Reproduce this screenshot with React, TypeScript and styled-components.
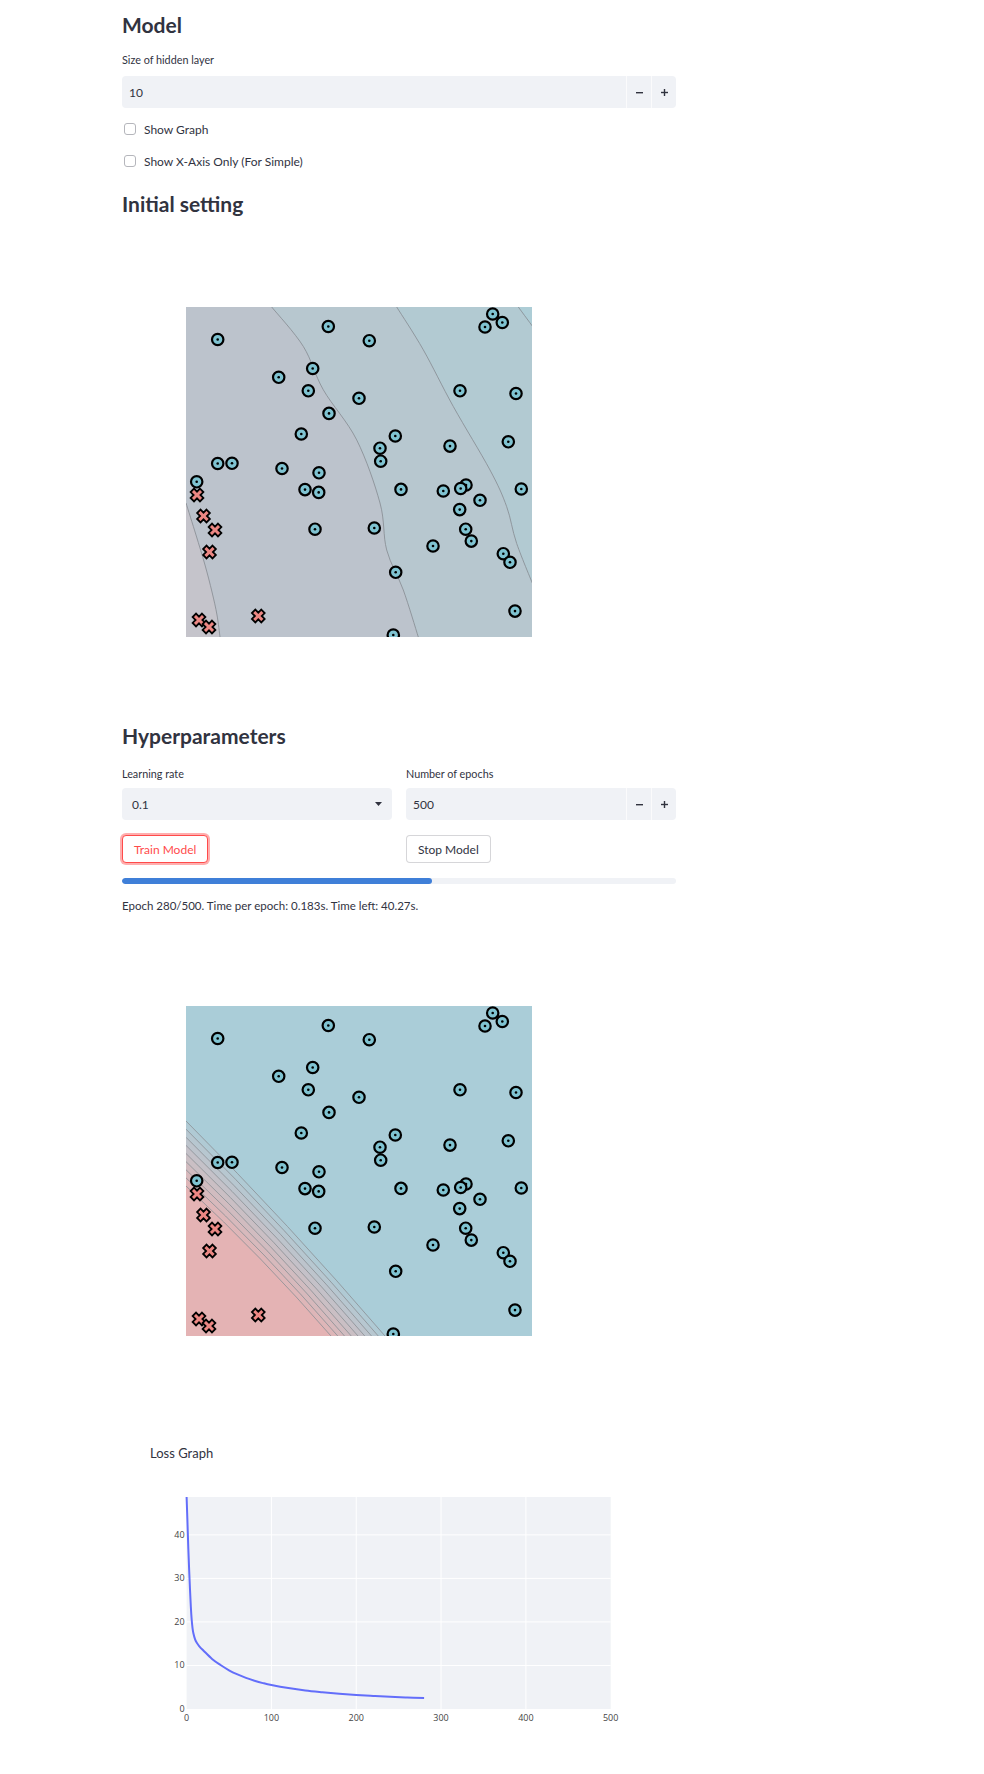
import React from 'react'
import styled, { createGlobalStyle } from 'styled-components'

const CIRCLES: number[][] = [
    [31.7, 32.5], [142.3, 19.5], [183.3, 33.7], [306.7, 7], [299, 20], [316.3, 15.5],
    [126.7, 61.5], [92.7, 70.3], [122.3, 83.8], [173, 91.3], [143, 106.4], [274, 83.8],
    [330, 86.5], [115.3, 127], [209.3, 129], [194, 141.2], [194.7, 154.2], [264, 139.1],
    [322.3, 134.8], [31.7, 156.5], [46, 156.3], [96, 161.5], [133, 165.8], [10.7, 174.8],
    [119, 182.6], [132.7, 185.4], [215, 182.4], [257.3, 184], [280, 178], [274.7, 181.5],
    [294, 193.3], [335.3, 182], [273.7, 202.6], [129, 222.2], [188.3, 221], [279.7, 222.2],
    [285.3, 234.1], [247, 239], [317.3, 246.7], [324, 255.3], [209.7, 265.3], [329, 304.1],
    [207.3, 328],
]

const CROSSES: number[][] = [
    [11, 188], [17.5, 209], [29, 223], [23.5, 245], [13, 313], [23, 320], [72.3, 309],
]

const X_SHAPE = '-2.4,-6.6 2.4,-6.6 2.4,-2.4 6.6,-2.4 6.6,2.4 2.4,2.4 2.4,6.6 -2.4,6.6 -2.4,2.4 -6.6,2.4 -6.6,-2.4 -2.4,-2.4'

// contour lines of the untrained model (plot pixels)
const LINE_A = [[0, 196], [10, 228], [19, 258], [26, 285], [31, 308], [34, 330]]
const LINE_B = [[85.7, 0], [117.3, 39.4], [137.3, 82.8], [170.7, 132.9], [194, 196], [200.7, 243], [217.3, 283], [232.3, 330]]
const LINE_C = [[210.7, 0], [237.3, 42.8], [267.3, 99.5], [304, 163], [320.7, 199.7], [330.7, 236.5], [350, 285]]
const LINE_D = [[332.3, 0], [350, 24]]

const LOSS: number[][] = [
    [0, 48.7], [1, 43], [2, 37], [3, 32], [4, 27.5], [5, 23.5], [6, 20.5], [7, 18.6], [8, 17.4],
    [10, 16], [12, 15.2], [15, 14.4], [20, 13.4], [30, 11.5], [40, 10.1], [50, 8.9], [60, 7.95],
    [70, 7.15], [80, 6.5], [90, 5.95], [100, 5.5], [120, 4.8], [140, 4.25], [160, 3.85],
    [180, 3.5], [200, 3.22], [220, 3.0], [240, 2.8], [260, 2.65], [280, 2.52],
]

const smooth = (pts: number[][]) => {
    let d = `M${pts[0][0]},${pts[0][1]}`
    for (let i = 0; i < pts.length - 1; i++) {
        const p0 = pts[i - 1] || pts[i]
        const p1 = pts[i]
        const p2 = pts[i + 1]
        const p3 = pts[i + 2] || p2
        const c1 = [p1[0] + (p2[0] - p0[0]) / 6, p1[1] + (p2[1] - p0[1]) / 6]
        const c2 = [p2[0] - (p3[0] - p1[0]) / 6, p2[1] - (p3[1] - p1[1]) / 6]
        d += ` C${c1[0]},${c1[1]} ${c2[0]},${c2[1]} ${p2[0]},${p2[1]}`
    }
    return d
}

const mix = (a: number[], b: number[], t: number) =>
    `rgb(${a.map((v, i) => Math.round(v + (b[i] - v) * t)).join(',')})`

const BLUE = [170, 205, 216]
const PINK = [228, 179, 180]

const InitialField = () => (
    <g>
        <rect width={346} height={330} fill="#bcc3cc" />
        <path d={`${smooth(LINE_B)} L346,330 L346,0 Z`} fill="#b7c7cf" />
        <path d={`${smooth(LINE_C)} L350,0 Z`} fill="#b2cad2" />
        <path d={`${smooth(LINE_D)} L350,0 Z`} fill="#adcdd6" />
        <path d={`${smooth(LINE_A)} L0,330 Z`} fill="#c5c4cb" />
        {[LINE_A, LINE_B, LINE_C, LINE_D].map((l, i) => (
            <path key={i} d={smooth(l)} fill="none" stroke="#858a90" strokeWidth={0.8} />
        ))}
    </g>
)

const TrainedField = () => {
    const lines = Array.from({ length: 9 }, (_, i) => {
        const t = i / 8
        const y0 = 115 + t * 65
        const x1 = 199 - t * 54
        return `M0,${y0} Q${x1 / 2 + 4},${(y0 + 330) / 2 - 4} ${x1},330`
    })
    return (
        <g>
            <rect width={346} height={330} fill={mix(BLUE, PINK, 0)} />
            {lines.map((d, i) => (
                <path key={i} d={`${d} L0,330 Z`} fill={mix(BLUE, PINK, (i + 1) / 9)} />
            ))}
            {lines.map((d, i) => (
                <path key={i} d={d} fill="none" stroke="#8a8f94" strokeWidth={0.8} />
            ))}
        </g>
    )
}

const Scatter = ({ trained }: { trained?: boolean }) => (
    <PlotSvg width={346} height={330} viewBox="0 0 346 330">
        {trained ? <TrainedField /> : <InitialField />}
        {CIRCLES.map(([x, y], i) => (
            <g key={i}>
                <circle cx={x} cy={y} r={5.7} fill="#7fc3d1" stroke="#000" strokeWidth={2.2} />
                <circle cx={x} cy={y} r={1.3} fill="#000" />
            </g>
        ))}
        {CROSSES.map(([x, y], i) => (
            <polygon
                key={i}
                points={X_SHAPE}
                transform={`translate(${x} ${y}) rotate(45)`}
                fill="#ec8783"
                stroke="#000"
                strokeWidth={1.8}
            />
        ))}
    </PlotSvg>
)

const PL = 36.6
const PR = 460.7
const PT = 7
const PB = 219
const sx = (e: number) => PL + (e * (PR - PL)) / 500
const sy = (v: number) => PB - (v * (PB - PT)) / 48.7

const LossChart = () => (
    <LossSvg width={480} height={240}>
        <rect x={PL} y={PT} width={PR - PL} height={PB - PT} fill="#f0f2f6" />
        {[100, 200, 300, 400].map((e) => (
            <line key={e} x1={sx(e)} x2={sx(e)} y1={PT} y2={PB} stroke="#fff" strokeWidth={1} />
        ))}
        {[10, 20, 30, 40].map((v) => (
            <line key={v} x1={PL} x2={PR} y1={sy(v)} y2={sy(v)} stroke="#fff" strokeWidth={1} />
        ))}
        <path
            d={smooth(LOSS.map(([e, v]) => [sx(e), sy(v)]))}
            fill="none"
            stroke="#636efa"
            strokeWidth={2}
        />
        {[0, 10, 20, 30, 40].map((v) => (
            <TickText key={v} x={PL - 2} y={sy(v) + 3} textAnchor="end">
                {v}
            </TickText>
        ))}
        {[0, 100, 200, 300, 400, 500].map((e) => (
            <TickText key={e} x={sx(e)} y={PB + 12} textAnchor="middle">
                {e}
            </TickText>
        ))}
    </LossSvg>
)

const Minus = () => (
    <svg width="9" height="9" viewBox="0 0 9 9">
        <rect x="1" y="4" width="7" height="1.4" fill="#31333f" />
    </svg>
)

const Plus = () => (
    <svg width="9" height="9" viewBox="0 0 9 9">
        <rect x="1" y="3.8" width="7" height="1.4" fill="#31333f" />
        <rect x="3.8" y="1" width="1.4" height="7" fill="#31333f" />
    </svg>
)

const NumberInput = ({ value }: { value: string }) => (
    <InputBox>
        <Value $pad={7}>{value}</Value>
        <StepButton>
            <Minus />
        </StepButton>
        <StepButton>
            <Plus />
        </StepButton>
    </InputBox>
)

const App: React.FunctionComponent = () => {
    const epoch = 280
    const total = 500
    return (
        <>
            <GlobalStyle />
            <Page>
                <Heading $top={12}>Model</Heading>
                <Label $top={15} $gap={9}>
                    Size of hidden layer
                </Label>
                <NumberInput value="10" />
                <CheckRow $top={11}>
                    <Box />
                    Show Graph
                </CheckRow>
                <CheckRow $top={12}>
                    <Box />
                    Show X-Axis Only (For Simple)
                </CheckRow>

                <Heading $top={20}>Initial setting</Heading>
                <Figure $top={90}>
                    <Scatter />
                </Figure>

                <Heading $top={86}>Hyperparameters</Heading>
                <Columns $top={18}>
                    <div>
                        <Label $gap={7}>Learning rate</Label>
                        <InputBox>
                            <Value $pad={10}>0.1</Value>
                            <Caret>
                                <svg width="7" height="4" viewBox="0 0 7 4">
                                    <path d="M0 0 H7 L3.5 4 Z" fill="#31333f" />
                                </svg>
                            </Caret>
                        </InputBox>
                    </div>
                    <div>
                        <Label $gap={7}>Number of epochs</Label>
                        <NumberInput value="500" />
                    </div>
                </Columns>
                <Columns $top={15}>
                    <div>
                        <Button $primary>Train Model</Button>
                    </div>
                    <div>
                        <Button>Stop Model</Button>
                    </div>
                </Columns>
                <Track>
                    <Fill style={{ width: `${(epoch / total) * 100}%` }} />
                </Track>
                <Status>
                    Epoch {epoch}/{total}. Time per epoch: 0.183s. Time left: 40.27s.
                </Status>

                <Figure $top={92}>
                    <Scatter trained />
                </Figure>

                <ChartTitle>Loss Graph</ChartTitle>
                <LossChart />
            </Page>
        </>
    )
}

const GlobalStyle = createGlobalStyle`
    html, body {
        margin: 0;
        padding: 0;
        background: #ffffff;
    }
    body {
        font-family: Lato, 'Noto Sans', sans-serif;
        color: #31333f;
    }
    * {
        box-sizing: border-box;
    }
`

const Page = styled.main`
    display: flex;
    flex-direction: column;
    width: 554px;
    margin-left: 122px;
    padding-bottom: 40px;
`

const Heading = styled.h2<{ $top: number }>`
    margin: ${(p) => p.$top}px 0 0;
    font-size: 21px;
    line-height: 26px;
    font-weight: 700;
    color: #31333f;
`

const Label = styled.div<{ $top?: number; $gap: number }>`
    margin: ${(p) => p.$top || 0}px 0 ${(p) => p.$gap}px;
    font-size: 10.8px;
    line-height: 14px;
    color: #31333f;
`

const InputBox = styled.div`
    display: flex;
    align-items: center;
    height: 32px;
    background: #f0f2f6;
    border-radius: 4px;
    font-size: 12px;
`

const Value = styled.div<{ $pad: number }>`
    flex: 1;
    padding-left: ${(p) => p.$pad}px;
`

const StepButton = styled.div`
    display: flex;
    align-items: center;
    justify-content: center;
    width: 25px;
    height: 100%;
    border-left: 1px solid rgba(255, 255, 255, 0.7);
`

const Caret = styled.div`
    display: flex;
    align-items: center;
    padding-right: 10px;
`

const CheckRow = styled.label<{ $top: number }>`
    display: flex;
    align-items: center;
    gap: 8px;
    height: 20px;
    margin-top: ${(p) => p.$top}px;
    padding-left: 2px;
    font-size: 12px;
`

const Box = styled.span`
    width: 12px;
    height: 12px;
    border: 1px solid #b5b6bc;
    border-radius: 3px;
    background: #ffffff;
`

const Figure = styled.div<{ $top: number }>`
    display: flex;
    margin-top: ${(p) => p.$top}px;
    padding-left: 64px;
`

const PlotSvg = styled.svg`
    display: block;
`

const Columns = styled.div<{ $top: number }>`
    display: grid;
    grid-template-columns: 1fr 1fr;
    gap: 14px;
    margin-top: ${(p) => p.$top}px;
`

const Button = styled.button<{ $primary?: boolean }>`
    height: 28px;
    padding: 0 11px;
    border-radius: 4px;
    background: #ffffff;
    font-family: Lato, 'Noto Sans', sans-serif;
    font-size: 12px;
    color: ${(p) => (p.$primary ? '#ff4b4b' : '#31333f')};
    border: 1px solid ${(p) => (p.$primary ? '#ff4b4b' : 'rgba(49, 51, 63, 0.2)')};
    box-shadow: ${(p) => (p.$primary ? '0 0 0 2px rgba(255, 75, 75, 0.45)' : 'none')};
`

const Track = styled.div`
    height: 6px;
    margin-top: 15px;
    border-radius: 3px;
    background: #f0f2f6;
    overflow: hidden;
`

const Fill = styled.div`
    height: 100%;
    border-radius: 3px;
    background: #3f7fd8;
`

const Status = styled.div`
    margin-top: 14px;
    font-size: 11.5px;
    line-height: 16px;
`

const ChartTitle = styled.div`
    margin: 109px 0 0 28px;
    font-size: 13px;
    line-height: 16px;
`

const LossSvg = styled.svg`
    display: block;
    margin: 29px 0 0 28px;
`

const TickText = styled.text`
    font-family: 'Open Sans', sans-serif;
    font-size: 9px;
    fill: #444444;
`

export default App
